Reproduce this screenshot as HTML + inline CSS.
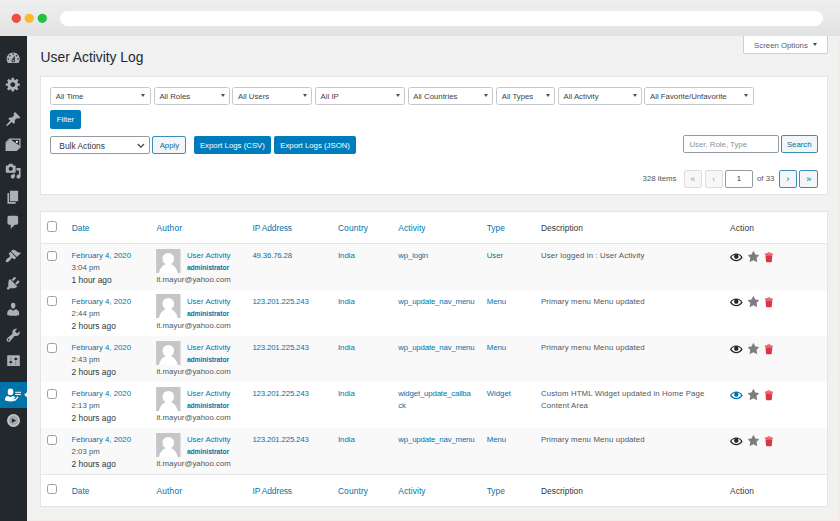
<!DOCTYPE html>
<html><head><meta charset="utf-8"><title>User Activity Log</title>
<style>
*{box-sizing:border-box;margin:0;padding:0}
html,body{width:840px;height:521px;overflow:hidden}
body{background:#f1f1f1;font-family:"Liberation Sans",Arial,sans-serif;font-size:7.8px;color:#50565b;position:relative}
.abs{position:absolute}
#chrome{left:0;top:0;width:840px;height:36px;background:linear-gradient(#efefef,#e2e2e2)}
.dot{position:absolute;top:13.4px;width:9.6px;height:9.6px;border-radius:50%}
#url{left:59.5px;top:10.7px;width:763px;height:15px;border-radius:8px;background:#fff}
#side{left:0;top:36px;width:27px;height:485px;background:#23282d}
.ic{position:absolute;left:5px;width:16.4px;height:16.4px;fill:#adb1b5}
#act{left:0;top:381.75px;width:27px;height:26.25px;background:#0073aa}
#arrow{left:24.2px;top:391.9px;width:0;height:0;border:2.9px solid transparent;border-right-color:#f1f1f1;border-left:0}
h1{position:absolute;left:40.6px;top:50.4px;font-size:13.8px;font-weight:400;color:#23282d;line-height:16px;white-space:nowrap}
#scr{left:743px;top:36px;width:85px;height:17.6px;background:#fff;border:1px solid #ccd0d4;border-top:0;border-radius:0 0 2px 2px;font-size:7.8px;color:#555d66;line-height:16.5px;padding-left:10.1px;padding-top:1.5px}
#scr i{position:absolute;left:68.9px;top:7.4px;border:2.5px solid transparent;border-top:3.2px solid #444b52;border-bottom:0}
.panel{position:absolute;background:#fff;border:1px solid #e2e4e7}
.sel{position:absolute;top:87px;height:17.6px;background:#fff;border:1px solid #c6c9cc;border-radius:2.5px;font-size:7.8px;line-height:16.2px;padding-left:4.6px;padding-top:1.3px;color:#3c4247;white-space:nowrap}
.sel i{position:absolute;right:4.3px;top:6.4px;border:2.4px solid transparent;border-top:3.3px solid #4a5055;border-bottom:0}
.btn{position:absolute;height:18.4px;border-radius:2px;font-size:7.8px;line-height:18.4px;text-align:center;white-space:nowrap}
.pri{background:#007cba;color:#fff;padding-top:1px}
.sec{background:#f3f5f6;border:1px solid #3d8dba;color:#0071a1;line-height:16.4px;padding-top:.9px}
.dis{background:#f7f7f7;border:1px solid #dddddd;color:#a0a5aa;line-height:16px;padding-top:.6px}
.inp{position:absolute;height:18.4px;background:#fff;border:1px solid #959ba1;border-radius:2px;font-size:7.8px;line-height:16.4px;padding-top:.9px;white-space:nowrap}
.th{position:absolute;font-size:8.4px;line-height:10px;white-space:nowrap;color:#0073aa}
.th.d{color:#32373c}
.cb{position:absolute;left:47px;width:10.2px;height:10.2px;border:1px solid #9aa1a7;border-radius:2.5px;background:#fff}
.row{position:absolute;left:41px;width:786px}
.row.o{background:#f9f9f9}
.t{position:absolute;white-space:nowrap;line-height:10px;color:#50565b}
.a{color:#0073aa}
.av{position:absolute;left:156.2px;width:24.6px;height:24.4px}
.act{position:absolute;left:729px}
</style></head><body>
<div id="chrome" class="abs">
 <svg class="abs" style="left:0;top:0" width="60" height="36"><circle cx="16.3" cy="18.3" r="4.650" fill="#ee4d43"/><circle cx="29.200" cy="18.300" r="4.650" fill="#fbb92f"/><circle cx="42.300" cy="18.300" r="4.650" fill="#24c13d"/></svg>
 <div id="url" class="abs"></div>
</div>
<div id="side" class="abs"></div>
<div id="act" class="abs"></div><svg class="abs" style="left:23px;top:390px" width="4" height="10" viewBox="0 0 4 10"><path d="M4 1.900v5.700L1.200 4.750z" fill="#f1f1f1"/></svg>
<svg class="ic" style="top:49.9px" viewBox="0 0 20 20"><path d="M3.76 16h12.48c1.1-1.37 1.76-3.11 1.76-5 0-4.420-3.580-8-8-8s-8 3.580-8 8c0 1.890.660 3.630 1.760 5zM10 4c.550 0 1 .450 1 1s-.450 1-1 1-1-.450-1-1 .450-1 1-1zM6 6c.550 0 1 .450 1 1s-.450 1-1 1-1-.450-1-1 .450-1 1-1zm8 0c.550 0 1 .450 1 1s-.450 1-1 1-1-.450-1-1 .450-1 1-1zm-5.370 5.550L12 7v6c0 1.100-.900 2-2 2s-2-.900-2-2c0-.570.240-1.080.630-1.450zM4 10c.550 0 1 .450 1 1s-.450 1-1 1-1-.450-1-1 .450-1 1-1zm12 0c.550 0 1 .450 1 1s-.450 1-1 1-1-.450-1-1 .450-1 1-1zm-5 3c0-.550-.450-1-1-1s-1 .450-1 1 .450 1 1 1 1-.450 1-1z"/></svg>
<svg class="ic" style="top:76.4px" viewBox="0 0 20 20"><path d="M18 12h-2.180c-.170.700-.440 1.350-.810 1.930l1.540 1.540-2.100 2.100-1.540-1.540c-.580.360-1.230.630-1.910.790V19H8v-2.180c-.680-.160-1.330-.430-1.910-.790l-1.540 1.540-2.120-2.120 1.540-1.540c-.360-.580-.630-1.230-.790-1.910H1V9.030h2.170c.160-.700.440-1.350.800-1.940L2.430 5.550l2.100-2.100 1.540 1.540c.580-.370 1.240-.640 1.930-.810V2h3v2.180c.680.160 1.330.430 1.910.790l1.540-1.540 2.120 2.120-1.540 1.540c.360.590.640 1.240.800 1.940H18V12zm-8.500 1.500c1.660 0 3-1.340 3-3s-1.340-3-3-3-3 1.340-3 3 1.340 3 3 3z"/></svg>
<svg class="ic" style="top:110.5px" viewBox="0 0 20 20"><path d="M10.440 3.020l1.820-1.820 6.360 6.350-1.830 1.820c-1.050-.680-2.480-.570-3.410.360l-.750.750c-.920.930-1.040 2.350-.350 3.410l-1.830 1.820-2.410-2.410-2.800 2.790c-.420.420-3.380 2.710-3.800 2.290s1.860-3.390 2.280-3.810l2.790-2.790L4.100 9.360l1.830-1.820c1.050.690 2.480.570 3.400-.360l.750-.750c.930-.920 1.050-2.350.360-3.410z"/></svg>
<svg class="ic" style="top:136.8px" viewBox="0 0 20 20"><path d="M5.300 1.700H19v11.400l-4.600 4.100H.700V6.400z"/><path d="M7.200 3.500h10.300v7z" style="fill:#23282d"/><circle cx="14.600" cy="6" r="1.400" style="fill:#e8eaeb"/><path d="M1.600 7.300l4-4.300M14.300 16.300l4-3.600" style="fill:none;stroke:#23282d;stroke-width:.5;opacity:.55"/></svg>
<svg class="ic" style="top:162.6px" viewBox="0 0 20 20"><path d="M13 11V4c0-.550-.450-1-1-1h-1.670L9 1H5L3.670 3H2c-.550 0-1 .450-1 1v7c0 .550.450 1 1 1h10c.550 0 1-.450 1-1zM7 4.500c1.380 0 2.500 1.120 2.500 2.500S8.380 9.500 7 9.500 4.500 8.380 4.500 7 5.620 4.500 7 4.500zM14 6h5v10.500c0 1.380-1.120 2.500-2.500 2.500S14 17.880 14 16.500s1.120-2.500 2.500-2.500c.170 0 .340.020.500.050V9h-3V6zm-4 8.050V13h2v3.500c0 1.380-1.120 2.500-2.500 2.500S7 17.880 7 16.500 8.120 14 9.500 14c.170 0 .340.020.500.050z"/></svg>
<svg class="ic" style="top:188.6px" viewBox="0 0 20 20"><path d="M6 15V2h10v13H6zm-1 1h8v2H3V5h2v11z"/></svg>
<svg class="ic" style="top:214.0px" viewBox="0 0 20 20"><path d="M5 2h9c1.100 0 2 .900 2 2v7c0 1.100-.900 2-2 2h-2l-5 5v-5H5c-1.100 0-2-.900-2-2V4c0-1.100.900-2 2-2z"/></svg>
<svg class="ic" style="top:248.3px" viewBox="0 0 20 20"><path d="M14.480 11.060L7.410 3.990l1.500-1.500c.500-.560 2.300-.470 3.510.320 1.210.800 1.430 1.280 2.910 2.100 1.180.640 2.450 1.260 4.450.850zm-.710.710L6.700 4.700 4.930 6.470c-.390.390-.390 1.020 0 1.410l1.060 1.060c.390.390.390 1.030 0 1.420-.600.600-1.430 1.110-2.210 1.690-.350.260-.700.530-1.010.840C1.430 14.230.400 16.080 1.400 17.070c.990 1 2.840-.030 4.180-1.360.310-.310.580-.660.850-1.020.570-.780 1.080-1.610 1.690-2.210.390-.390 1.020-.390 1.410 0l1.060 1.060c.390.390 1.020.390 1.410 0z"/></svg>
<svg class="ic" style="top:275.3px" viewBox="0 0 20 20"><path d="M13.110 4.360L9.870 7.600 8 5.730l3.240-3.240c.350-.340 1.050-.200 1.560.320.520.510.660 1.210.310 1.550zm-8 1.770l.910-1.120 9.010 9.010-1.190.840c-.710.710-2.630 1.160-3.820 1.160H6.140L4.900 17.260c-.590.590-1.540.590-2.120 0-.590-.580-.590-1.530 0-2.120l1.240-1.240v-3.880c0-1.130.400-3.190 1.090-3.890zm7.260 3.970l3.240-3.240c.340-.350 1.040-.210 1.550.310.520.510.660 1.210.310 1.550l-3.240 3.250z"/></svg>
<svg class="ic" style="top:300.8px" viewBox="0 0 20 20"><path d="M10 9.250c-2.270 0-2.730-3.440-2.730-3.440C7 4.020 7.820 2 9.970 2c2.160 0 2.980 2.020 2.710 3.810 0 0-.410 3.440-2.680 3.440zm0 2.570L12.720 10c2.390 0 4.520 2.330 4.520 4.530v2.490s-3.650 1.130-7.240 1.130c-3.650 0-7.240-1.130-7.240-1.130v-2.490c0-2.250 1.940-4.480 4.470-4.480z"/></svg>
<svg class="ic" style="top:326.6px" viewBox="0 0 20 20"><path d="M16.680 9.770c-1.340 1.340-3.300 1.670-4.950.990l-5.410 6.520c-.990.990-2.590.990-3.580 0s-.990-2.590 0-3.570l6.520-5.420c-.680-1.650-.350-3.610.990-4.950 1.280-1.280 3.120-1.620 4.720-1.060l-2.890 2.890 2.820 2.820 2.860-2.870c.530 1.580.180 3.390-1.080 4.650zM3.810 16.210c.400.390 1.040.390 1.430 0 .400-.400.400-1.040 0-1.430-.390-.400-1.030-.400-1.430 0-.390.390-.390 1.030 0 1.430z"/></svg>
<svg class="abs" style="left:0;top:381px" width="27" height="28" viewBox="0 0 27 28"><g fill="#fff"><ellipse cx="10.500" cy="10.900" rx="2.800" ry="3.300"/><path d="M5 19.300v-1.300c0-1.500 1.400-2.700 3.100-2.900l2.400 1.200 2.400-1.200c1 .1 1.900.6 2.500 1.300l-2.300 1.900 1.500 1.300-.3.400c-1 .3-2.400.4-3.800.4-2.300 0-4.300-.4-5.500-1.100z"/><rect x="15.200" y="10.800" width="5.800" height="1"/><rect x="15.200" y="12.950" width="5.800" height="1"/></g><path d="M13.400 17.700l1.700 1.500 3-3.500" fill="none" stroke="#fff" stroke-width="1.300"/></svg>
<svg class="abs" style="left:7px;top:354.500px" width="13" height="11.800" viewBox="0 0 13 11.800"><rect x=".2" y=".2" width="12.600" height="11.400" rx=".8" fill="#adb1b5"/><path d="M3.750 1.800v8.200M8.750 1.800v8.200" stroke="#23282d" stroke-width=".7" opacity=".45"/><rect x="2.200" y="6.200" width="3.200" height="1.800" rx=".8" fill="#23282d"/><rect x="7.200" y="3.100" width="3.200" height="1.800" rx=".8" fill="#23282d"/></svg>
<svg class="abs" style="left:6px;top:413px" width="15" height="15" viewBox="0 0 15 15"><circle cx="7.500" cy="7.500" r="6.500" fill="#c6c9cc"/><circle cx="7.500" cy="7.500" r="4.900" fill="#a4a8ab"/><path d="M5.800 5.200v4.700l4.200-2.350z" fill="#23282d"/></svg>

<h1>User Activity Log</h1>
<div id="scr" class="abs">Screen Options<i></i></div>

<div class="panel" style="left:40.2px;top:76.4px;width:788px;height:119px"></div>
<div class="sel" style="left:50.1px;width:100.6px">All Time<i></i></div>
<div class="sel" style="left:153.8px;width:76px">All Roles<i></i></div>
<div class="sel" style="left:232.4px;width:79.5px">All Users<i></i></div>
<div class="sel" style="left:315px;width:89.8px">All IP<i></i></div>
<div class="sel" style="left:407.6px;width:85.8px">All Countries<i></i></div>
<div class="sel" style="left:496.2px;width:58.8px">All Types<i></i></div>
<div class="sel" style="left:557.9px;width:84px">All Activity<i></i></div>
<div class="sel" style="left:644.4px;width:109.4px">All Favorite/Unfavorite<i></i></div>
<div class="btn pri" style="left:50.1px;top:110.2px;width:30.7px">Filter</div>
<div class="inp" style="left:50.3px;top:136px;width:99.6px;font-size:8.4px;padding-left:8px;color:#32373c">Bulk Actions<svg class="abs" style="right:4.2px;top:5.800px" width="7.800" height="5.600" viewBox="0 0 7.800 5.600"><path d="M.8 1l3.100 3.200L7 1" fill="none" stroke="#444" stroke-width="1.250"/></svg></div>
<div class="btn sec" style="left:152.4px;top:136px;width:34px">Apply</div>
<div class="btn pri" style="left:193.8px;top:136px;width:77.2px">Export Logs (CSV)</div>
<div class="btn pri" style="left:273.8px;top:136px;width:82.6px">Export Logs (JSON)</div>
<div class="inp" style="left:683.3px;top:134.8px;width:95.3px;padding-left:5.2px;color:#8d9298">User, Role, Type</div>
<div class="btn sec" style="left:780.5px;top:134.8px;width:37.5px">Search</div>
<div class="t" style="left:642.6px;top:174px">328 items</div>
<div class="btn dis" style="left:683.6px;top:169.5px;width:18.3px"><span style="font-size:9.2px">«</span></div>
<div class="btn dis" style="left:704.8px;top:169.5px;width:18.2px"><span style="font-size:9.2px">‹</span></div>
<div class="inp" style="left:725px;top:169.5px;width:28px;text-align:center;color:#32373c">1</div>
<div class="t" style="left:757px;top:174px">of 33</div>
<div class="btn sec" style="left:778.6px;top:169.5px;width:18.4px"><span style="font-size:9.2px">›</span></div>
<div class="btn sec" style="left:799.4px;top:169.5px;width:18.6px"><span style="font-size:9.2px">»</span></div>

<div class="panel" style="left:40.2px;top:211.3px;width:788px;height:295.3px"></div>
<div class="cb" style="top:221.4px"></div>
<div class="th a" style="left:71.8px;top:223.3px;letter-spacing:0px">Date</div>
<div class="th a" style="left:156.4px;top:223.3px;letter-spacing:0.2px">Author</div>
<div class="th a" style="left:252.4px;top:223.3px;letter-spacing:-0.08px">IP Address</div>
<div class="th a" style="left:337.9px;top:223.3px;letter-spacing:0.14px">Country</div>
<div class="th a" style="left:398.3px;top:223.3px;letter-spacing:0.1px">Activity</div>
<div class="th a" style="left:486.7px;top:223.3px;letter-spacing:0px">Type</div>
<div class="th d" style="left:541px;top:223.3px;letter-spacing:0px">Description</div>
<div class="th d" style="left:730px;top:223.3px;letter-spacing:0.15px">Action</div>
<div class="abs" style="left:41px;top:243.3px;width:786px;height:1px;background:#e4e6e8"></div>
<div class="row o" style="top:244.0px;height:45.5px"></div>
<div class="cb" style="top:251.2px"></div>
<div class="t a" style="left:71.6px;top:250.6px">February 4, 2020</div>
<div class="t" style="left:71.6px;top:262.9px">3:04 pm</div>
<div class="t" style="left:71.6px;top:274.7px;color:#32373c;font-size:8.4px">1 hour ago</div>
<svg class="av" style="top:248.9px" viewBox="0 0 40 40"><rect width="40" height="40" fill="#c6c6c6"/><circle cx="20" cy="16" r="9.600" fill="#fff"/><ellipse cx="20" cy="43.800" rx="15.800" ry="19.500" fill="#fff"/></svg>
<div class="t a" style="left:186.9px;top:250.6px;letter-spacing:.06px">User Activity</div>
<div class="t a" style="left:186.9px;top:262.9px;font-size:6.7px;font-weight:700;letter-spacing:-.05px">administrator</div>
<div class="t" style="left:156.4px;top:275.3px;letter-spacing:.04px">it.mayur@yahoo.com</div>
<div class="t a" style="left:252.4px;top:250.6px;letter-spacing:-.15px">49.36.76.28</div>
<div class="t a" style="left:337.9px;top:250.6px">India</div>
<div class="t a" style="left:398.3px;top:250.6px;letter-spacing:-.15px">wp_login</div>
<div class="t a" style="left:486.7px;top:250.6px">User</div>
<div class="t" style="left:541px;top:250.6px;letter-spacing:.13px">User logged in : User Activity</div>
<svg class="abs" style="left:730px;top:251.0px" width="12.600" height="12.600" viewBox="0 0 20 20"><path fill="#23282d" d="M19.700 9.400C17.700 6 14 3.900 10 3.900S2.300 6 .300 9.400L0 10l.300.600c2 3.400 5.700 5.500 9.700 5.500s7.700-2.100 9.700-5.500l.300-.600-.300-.600zM10 14.100c-3.100 0-6-1.600-7.700-4.100C3.600 8 5.700 6.600 8 6.100c-.900.600-1.500 1.700-1.500 2.900 0 1.900 1.600 3.500 3.500 3.500s3.500-1.600 3.500-3.500c0-1.200-.600-2.300-1.500-2.900 2.300.500 4.400 1.900 5.700 3.900-1.700 2.500-4.600 4.100-7.700 4.100z"/></svg>
<svg class="abs" style="left:746.6px;top:250.3px" width="12.800" height="12.800" viewBox="0 0 20 20"><path fill="#7e7e7e" d="M10 1l3 6 6 .750-4.120 4.620L16 19l-6-3-6 3 1.130-6.630L1 7.750 7 7z"/></svg>
<svg class="abs" style="left:762.8px;top:251.3px" width="12.400" height="12.400" viewBox="0 0 20 20"><path fill="#dc3545" d="M12 4h3c.600 0 1 .400 1 1v1H3V5c0-.600.500-1 1-1h3c.200-1.100 1.300-2 2.500-2s2.300.900 2.500 2zM8 4h3c-.200-.600-.900-1-1.500-1S8.200 3.400 8 4zM4 7h11l-.900 10.100c0 .500-.500.900-1 .900H5.900c-.500 0-.900-.400-1-.900L4 7z"/></svg>
<div class="cb" style="top:296.2px"></div>
<div class="t a" style="left:71.6px;top:296.7px">February 4, 2020</div>
<div class="t" style="left:71.6px;top:309.0px">2:44 pm</div>
<div class="t" style="left:71.6px;top:320.8px;color:#32373c;font-size:8.4px">2 hours ago</div>
<svg class="av" style="top:293.9px" viewBox="0 0 40 40"><rect width="40" height="40" fill="#c6c6c6"/><circle cx="20" cy="16" r="9.600" fill="#fff"/><ellipse cx="20" cy="43.800" rx="15.800" ry="19.500" fill="#fff"/></svg>
<div class="t a" style="left:186.9px;top:296.7px;letter-spacing:.06px">User Activity</div>
<div class="t a" style="left:186.9px;top:309.0px;font-size:6.7px;font-weight:700;letter-spacing:-.05px">administrator</div>
<div class="t" style="left:156.4px;top:321.4px;letter-spacing:.04px">it.mayur@yahoo.com</div>
<div class="t a" style="left:252.4px;top:296.7px;letter-spacing:-.15px">123.201.225.243</div>
<div class="t a" style="left:337.9px;top:296.7px">India</div>
<div class="t a" style="left:398.3px;top:296.7px;letter-spacing:-.15px">wp_update_nav_menu</div>
<div class="t a" style="left:486.7px;top:296.7px">Menu</div>
<div class="t" style="left:541px;top:296.7px;letter-spacing:.13px">Primary menu Menu updated</div>
<svg class="abs" style="left:730px;top:296.0px" width="12.600" height="12.600" viewBox="0 0 20 20"><path fill="#23282d" d="M19.700 9.400C17.700 6 14 3.900 10 3.900S2.300 6 .300 9.400L0 10l.300.600c2 3.400 5.700 5.500 9.700 5.500s7.700-2.100 9.700-5.500l.300-.600-.300-.600zM10 14.100c-3.100 0-6-1.600-7.700-4.100C3.600 8 5.700 6.600 8 6.100c-.900.600-1.500 1.700-1.500 2.900 0 1.900 1.600 3.500 3.500 3.500s3.500-1.600 3.500-3.500c0-1.200-.600-2.300-1.500-2.900 2.300.500 4.400 1.900 5.700 3.900-1.700 2.500-4.600 4.100-7.700 4.100z"/></svg>
<svg class="abs" style="left:746.6px;top:295.3px" width="12.800" height="12.800" viewBox="0 0 20 20"><path fill="#7e7e7e" d="M10 1l3 6 6 .750-4.120 4.620L16 19l-6-3-6 3 1.130-6.630L1 7.750 7 7z"/></svg>
<svg class="abs" style="left:762.8px;top:296.3px" width="12.400" height="12.400" viewBox="0 0 20 20"><path fill="#dc3545" d="M12 4h3c.600 0 1 .400 1 1v1H3V5c0-.600.500-1 1-1h3c.200-1.100 1.300-2 2.500-2s2.300.900 2.500 2zM8 4h3c-.200-.600-.900-1-1.500-1S8.200 3.400 8 4zM4 7h11l-.900 10.100c0 .500-.500.900-1 .900H5.900c-.500 0-.900-.400-1-.900L4 7z"/></svg>
<div class="row o" style="top:336.0px;height:46px"></div>
<div class="cb" style="top:343.2px"></div>
<div class="t a" style="left:71.6px;top:342.6px">February 4, 2020</div>
<div class="t" style="left:71.6px;top:354.9px">2:43 pm</div>
<div class="t" style="left:71.6px;top:366.7px;color:#32373c;font-size:8.4px">2 hours ago</div>
<svg class="av" style="top:340.9px" viewBox="0 0 40 40"><rect width="40" height="40" fill="#c6c6c6"/><circle cx="20" cy="16" r="9.600" fill="#fff"/><ellipse cx="20" cy="43.800" rx="15.800" ry="19.500" fill="#fff"/></svg>
<div class="t a" style="left:186.9px;top:342.6px;letter-spacing:.06px">User Activity</div>
<div class="t a" style="left:186.9px;top:354.9px;font-size:6.7px;font-weight:700;letter-spacing:-.05px">administrator</div>
<div class="t" style="left:156.4px;top:367.3px;letter-spacing:.04px">it.mayur@yahoo.com</div>
<div class="t a" style="left:252.4px;top:342.6px;letter-spacing:-.15px">123.201.225.243</div>
<div class="t a" style="left:337.9px;top:342.6px">India</div>
<div class="t a" style="left:398.3px;top:342.6px;letter-spacing:-.15px">wp_update_nav_menu</div>
<div class="t a" style="left:486.7px;top:342.6px">Menu</div>
<div class="t" style="left:541px;top:342.6px;letter-spacing:.13px">Primary menu Menu updated</div>
<svg class="abs" style="left:730px;top:343.0px" width="12.600" height="12.600" viewBox="0 0 20 20"><path fill="#23282d" d="M19.700 9.400C17.700 6 14 3.900 10 3.900S2.300 6 .300 9.400L0 10l.300.600c2 3.400 5.700 5.500 9.700 5.500s7.700-2.100 9.700-5.500l.300-.600-.300-.600zM10 14.100c-3.100 0-6-1.600-7.700-4.100C3.600 8 5.700 6.600 8 6.100c-.900.600-1.500 1.700-1.500 2.900 0 1.900 1.600 3.500 3.500 3.500s3.500-1.600 3.500-3.500c0-1.200-.600-2.300-1.500-2.900 2.300.500 4.400 1.900 5.700 3.900-1.700 2.500-4.600 4.100-7.700 4.100z"/></svg>
<svg class="abs" style="left:746.6px;top:342.3px" width="12.800" height="12.800" viewBox="0 0 20 20"><path fill="#7e7e7e" d="M10 1l3 6 6 .750-4.120 4.620L16 19l-6-3-6 3 1.130-6.630L1 7.750 7 7z"/></svg>
<svg class="abs" style="left:762.8px;top:343.3px" width="12.400" height="12.400" viewBox="0 0 20 20"><path fill="#dc3545" d="M12 4h3c.600 0 1 .400 1 1v1H3V5c0-.600.500-1 1-1h3c.200-1.100 1.300-2 2.500-2s2.300.900 2.500 2zM8 4h3c-.200-.600-.900-1-1.500-1S8.200 3.400 8 4zM4 7h11l-.900 10.100c0 .500-.500.900-1 .900H5.900c-.500 0-.900-.400-1-.900L4 7z"/></svg>
<div class="cb" style="top:389.2px"></div>
<div class="t a" style="left:71.6px;top:388.6px">February 4, 2020</div>
<div class="t" style="left:71.6px;top:400.9px">2:13 pm</div>
<div class="t" style="left:71.6px;top:412.7px;color:#32373c;font-size:8.4px">2 hours ago</div>
<svg class="av" style="top:386.9px" viewBox="0 0 40 40"><rect width="40" height="40" fill="#c6c6c6"/><circle cx="20" cy="16" r="9.600" fill="#fff"/><ellipse cx="20" cy="43.800" rx="15.800" ry="19.500" fill="#fff"/></svg>
<div class="t a" style="left:186.9px;top:388.6px;letter-spacing:.06px">User Activity</div>
<div class="t a" style="left:186.9px;top:400.9px;font-size:6.7px;font-weight:700;letter-spacing:-.05px">administrator</div>
<div class="t" style="left:156.4px;top:413.3px;letter-spacing:.04px">it.mayur@yahoo.com</div>
<div class="t a" style="left:252.4px;top:388.6px;letter-spacing:-.15px">123.201.225.243</div>
<div class="t a" style="left:337.9px;top:388.6px">India</div>
<div class="t a" style="left:398.3px;top:388.6px;letter-spacing:-.15px">widget_update_callba</div>
<div class="t a" style="left:398.3px;top:400.8px;letter-spacing:-.15px">ck</div>
<div class="t a" style="left:486.7px;top:388.6px">Widget</div>
<div class="t" style="left:541px;top:388.6px;letter-spacing:.13px">Custom HTML Widget updated in Home Page</div>
<div class="t" style="left:541px;top:400.8px;letter-spacing:.13px">Content Area</div>
<svg class="abs" style="left:730px;top:389.0px" width="12.600" height="12.600" viewBox="0 0 20 20"><path fill="#0073aa" d="M19.700 9.400C17.700 6 14 3.900 10 3.900S2.300 6 .300 9.400L0 10l.300.600c2 3.400 5.700 5.500 9.700 5.500s7.700-2.100 9.700-5.500l.300-.600-.300-.600zM10 14.100c-3.100 0-6-1.600-7.700-4.100C3.600 8 5.700 6.600 8 6.100c-.900.600-1.500 1.700-1.500 2.900 0 1.900 1.600 3.500 3.500 3.500s3.500-1.600 3.500-3.500c0-1.200-.600-2.300-1.500-2.900 2.300.500 4.400 1.900 5.700 3.900-1.700 2.500-4.600 4.100-7.700 4.100z"/></svg>
<svg class="abs" style="left:746.6px;top:388.3px" width="12.800" height="12.800" viewBox="0 0 20 20"><path fill="#7e7e7e" d="M10 1l3 6 6 .750-4.120 4.620L16 19l-6-3-6 3 1.130-6.630L1 7.750 7 7z"/></svg>
<svg class="abs" style="left:762.8px;top:389.3px" width="12.400" height="12.400" viewBox="0 0 20 20"><path fill="#dc3545" d="M12 4h3c.600 0 1 .400 1 1v1H3V5c0-.600.500-1 1-1h3c.200-1.100 1.300-2 2.500-2s2.300.900 2.500 2zM8 4h3c-.200-.600-.900-1-1.500-1S8.200 3.400 8 4zM4 7h11l-.900 10.100c0 .500-.500.900-1 .900H5.900c-.500 0-.900-.400-1-.900L4 7z"/></svg>
<div class="row o" style="top:428.0px;height:46px"></div>
<div class="cb" style="top:435.2px"></div>
<div class="t a" style="left:71.6px;top:434.6px">February 4, 2020</div>
<div class="t" style="left:71.6px;top:446.9px">2:03 pm</div>
<div class="t" style="left:71.6px;top:458.7px;color:#32373c;font-size:8.4px">2 hours ago</div>
<svg class="av" style="top:432.9px" viewBox="0 0 40 40"><rect width="40" height="40" fill="#c6c6c6"/><circle cx="20" cy="16" r="9.600" fill="#fff"/><ellipse cx="20" cy="43.800" rx="15.800" ry="19.500" fill="#fff"/></svg>
<div class="t a" style="left:186.9px;top:434.6px;letter-spacing:.06px">User Activity</div>
<div class="t a" style="left:186.9px;top:446.9px;font-size:6.7px;font-weight:700;letter-spacing:-.05px">administrator</div>
<div class="t" style="left:156.4px;top:459.3px;letter-spacing:.04px">it.mayur@yahoo.com</div>
<div class="t a" style="left:252.4px;top:434.6px;letter-spacing:-.15px">123.201.225.243</div>
<div class="t a" style="left:337.9px;top:434.6px">India</div>
<div class="t a" style="left:398.3px;top:434.6px;letter-spacing:-.15px">wp_update_nav_menu</div>
<div class="t a" style="left:486.7px;top:434.6px">Menu</div>
<div class="t" style="left:541px;top:434.6px;letter-spacing:.13px">Primary menu Menu updated</div>
<svg class="abs" style="left:730px;top:435.0px" width="12.600" height="12.600" viewBox="0 0 20 20"><path fill="#23282d" d="M19.700 9.400C17.700 6 14 3.900 10 3.900S2.300 6 .300 9.400L0 10l.300.600c2 3.400 5.700 5.500 9.700 5.500s7.700-2.100 9.700-5.500l.300-.600-.300-.600zM10 14.100c-3.100 0-6-1.600-7.700-4.100C3.600 8 5.700 6.600 8 6.100c-.900.600-1.500 1.700-1.500 2.900 0 1.900 1.600 3.500 3.500 3.500s3.500-1.600 3.500-3.500c0-1.200-.600-2.300-1.500-2.900 2.300.500 4.400 1.900 5.700 3.900-1.700 2.500-4.600 4.100-7.700 4.100z"/></svg>
<svg class="abs" style="left:746.6px;top:434.3px" width="12.800" height="12.800" viewBox="0 0 20 20"><path fill="#7e7e7e" d="M10 1l3 6 6 .750-4.120 4.620L16 19l-6-3-6 3 1.130-6.630L1 7.750 7 7z"/></svg>
<svg class="abs" style="left:762.8px;top:435.3px" width="12.400" height="12.400" viewBox="0 0 20 20"><path fill="#dc3545" d="M12 4h3c.600 0 1 .400 1 1v1H3V5c0-.600.500-1 1-1h3c.200-1.100 1.300-2 2.500-2s2.300.900 2.500 2zM8 4h3c-.200-.600-.900-1-1.500-1S8.200 3.400 8 4zM4 7h11l-.900 10.100c0 .500-.500.900-1 .900H5.900c-.500 0-.900-.400-1-.900L4 7z"/></svg>
<div class="abs" style="left:41px;top:474px;width:786px;height:1px;background:#e4e6e8"></div>
<div class="cb" style="top:484.2px"></div>
<div class="th a" style="left:71.8px;top:486.3px;letter-spacing:0px">Date</div>
<div class="th a" style="left:156.4px;top:486.3px;letter-spacing:0.2px">Author</div>
<div class="th a" style="left:252.4px;top:486.3px;letter-spacing:-0.08px">IP Address</div>
<div class="th a" style="left:337.9px;top:486.3px;letter-spacing:0.14px">Country</div>
<div class="th a" style="left:398.3px;top:486.3px;letter-spacing:0.1px">Activity</div>
<div class="th a" style="left:486.7px;top:486.3px;letter-spacing:0px">Type</div>
<div class="th d" style="left:541px;top:486.3px;letter-spacing:0px">Description</div>
<div class="th d" style="left:730px;top:486.3px;letter-spacing:0.15px">Action</div>

<div class="abs" style="left:839px;top:36px;width:1px;height:485px;background:#f3eaea"></div><div class="abs" style="left:27px;top:520px;width:813px;height:1px;background:#f3eaea"></div>
</body></html>
